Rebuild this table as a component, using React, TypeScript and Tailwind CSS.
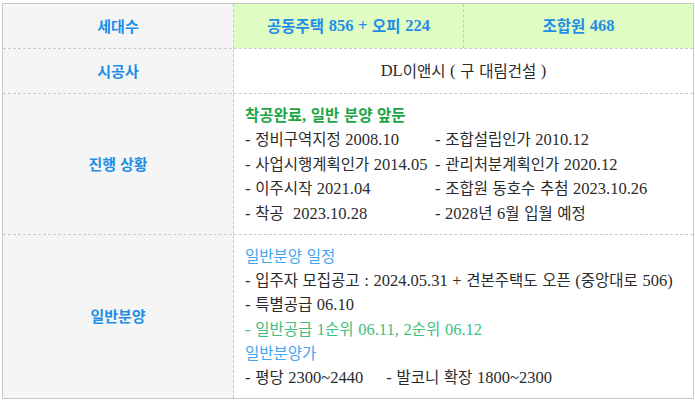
import React from "react";

const KO = '"Noto Sans CJK KR", sans-serif';
const LA = '"Liberation Serif", "Noto Sans CJK KR", serif';

function T({ s }: { s: string }) {
  const parts = s.split(/([가-힣]+)/);
  return (
    <>
      {parts.map((p, i) =>
        p === "" ? null : /[가-힣]/.test(p) ? (
          <span key={i} className="text-[15.5px] leading-none" style={{ fontFamily: KO }}>
            {p}
          </span>
        ) : (
          <span key={i} className="text-[16.5px] leading-none" style={{ fontFamily: LA }}>
            {p}
          </span>
        )
      )}
    </>
  );
}

export default function App() {
  const labelCls =
    "bg-[#f5f5f5] border-r border-dashed border-[#c8c8c8] flex items-center justify-center text-[#1e8ee6] font-bold text-[15px]";
  return (
    <div className="w-[695px] h-[410px] bg-white pt-[3px] pl-[2px]" style={{ fontFamily: KO }}>
      <div className="w-[692px] border-t border-dashed border-t-[#c8c8c8] border-l border-r border-b border-l-[#c8c8c8] border-r-[#c8c8c8] border-b-[#c8c8c8] border-solid text-[14px] text-[#2b2b2b] [word-spacing:0.5px]">
        {/* row 1 */}
        <div className="grid grid-cols-[231px_230px_1fr] h-[45px] border-b border-dashed border-[#c8c8c8]">
          <div className={labelCls}>세대수</div>
          <div className="bg-[#dffcc2] border-r border-dashed border-[#c8c8c8] flex items-center justify-center text-[#1e8ee6] font-bold whitespace-pre">
            <T s="공동주택 856 + 오피 224" />
          </div>
          <div className="bg-[#dffcc2] flex items-center justify-center text-[#1e8ee6] font-bold whitespace-pre">
            <T s="조합원 468" />
          </div>
        </div>
        {/* row 2 */}
        <div className="grid grid-cols-[231px_1fr] h-[45px] border-b border-dashed border-[#c8c8c8]">
          <div className={labelCls}>시공사</div>
          <div className="flex items-center justify-center whitespace-pre">
            <T s="DL이앤시 ( 구 대림건설 )" />
          </div>
        </div>
        {/* row 3 */}
        <div className="grid grid-cols-[231px_1fr] border-b border-dashed border-[#c8c8c8]">
          <div className={labelCls}>진행 상황</div>
          <div className="px-[11px] py-[9px] leading-[24.4px] whitespace-pre">
            <div className="text-[#1ca545] font-bold">
              <T s="착공완료, 일반 분양 앞둔" />
            </div>
            <div className="grid grid-cols-[190px_1fr]">
              <div><T s="- 정비구역지정 2008.10" /></div>
              <div><T s="- 조합설립인가 2010.12" /></div>
              <div><T s="- 사업시행계획인가 2014.05" /></div>
              <div><T s="- 관리처분계획인가 2020.12" /></div>
              <div><T s="- 이주시작 2021.04" /></div>
              <div><T s="- 조합원 동호수 추첨 2023.10.26" /></div>
              <div><T s="- 착공  2023.10.28" /></div>
              <div><T s="- 2028년 6월 입월 예정" /></div>
            </div>
          </div>
        </div>
        {/* row 4 */}
        <div className="grid grid-cols-[231px_1fr]">
          <div className={labelCls}>일반분양</div>
          <div className="px-[11px] py-[9px] leading-[24.2px] whitespace-pre">
            <div className="text-[#3fa5ee]"><T s="일반분양 일정" /></div>
            <div><T s="- 입주자 모집공고 : 2024.05.31 + 견본주택도 오픈 (중앙대로 506)" /></div>
            <div><T s="- 특별공급 06.10" /></div>
            <div className="text-[#3cc07e]"><T s="- 일반공급 1순위 06.11, 2순위 06.12" /></div>
            <div className="text-[#3fa5ee]"><T s="일반분양가" /></div>
            <div><T s="- 평당 2300~2440     - 발코니 확장 1800~2300" /></div>
          </div>
        </div>
      </div>
    </div>
  );
}
